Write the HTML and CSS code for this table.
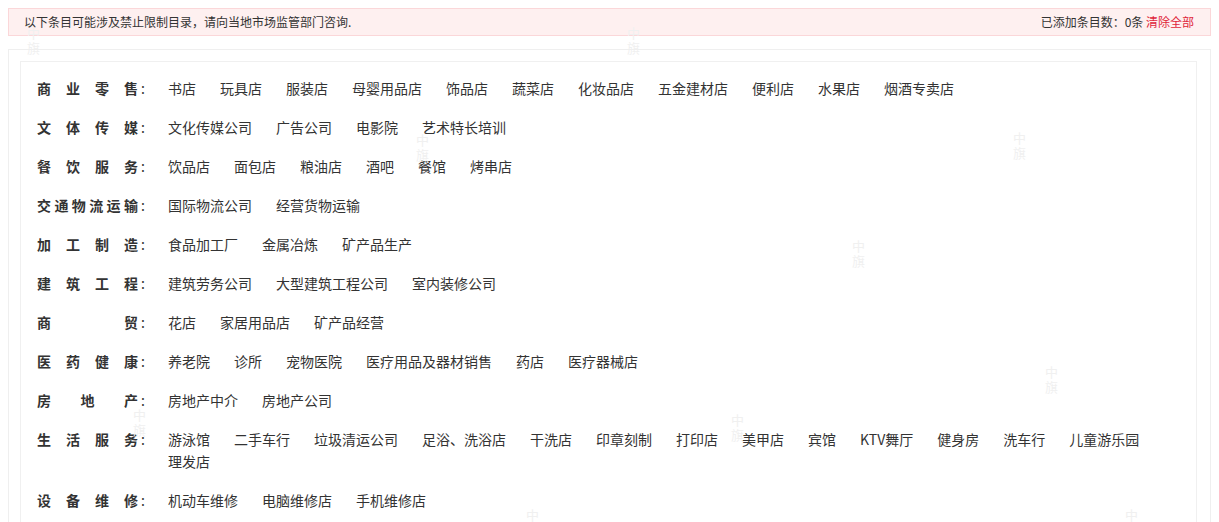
FILE: index.html
```html
<!DOCTYPE html>
<html lang="zh-CN">
<head>
<meta charset="utf-8">
<title>禁止限制目录</title>
<link rel="stylesheet" href="styles.css">
</head>
<body>
<div class="alert">
  <span class="alert-msg">以下条目可能涉及禁止限制目录，请向当地市场监管部门咨询.</span>
  <span class="alert-count">已添加条目数：0条 <a class="clear" href="#">清除全部</a></span>
</div>

<div class="outer">
  <div class="inner">
    <div class="row"><div class="label"><span class="lbl">商业零售</span><span class="colon">:</span></div>
      <div class="items"><a>书店</a><a>玩具店</a><a>服装店</a><a>母婴用品店</a><a>饰品店</a><a>蔬菜店</a><a>化妆品店</a><a>五金建材店</a><a>便利店</a><a>水果店</a><a>烟酒专卖店</a></div></div>
    <div class="row"><div class="label"><span class="lbl">文体传媒</span><span class="colon">:</span></div>
      <div class="items"><a>文化传媒公司</a><a>广告公司</a><a>电影院</a><a>艺术特长培训</a></div></div>
    <div class="row"><div class="label"><span class="lbl">餐饮服务</span><span class="colon">:</span></div>
      <div class="items"><a>饮品店</a><a>面包店</a><a>粮油店</a><a>酒吧</a><a>餐馆</a><a>烤串店</a></div></div>
    <div class="row"><div class="label"><span class="lbl">交通物流运输</span><span class="colon">:</span></div>
      <div class="items"><a>国际物流公司</a><a>经营货物运输</a></div></div>
    <div class="row"><div class="label"><span class="lbl">加工制造</span><span class="colon">:</span></div>
      <div class="items"><a>食品加工厂</a><a>金属冶炼</a><a>矿产品生产</a></div></div>
    <div class="row"><div class="label"><span class="lbl">建筑工程</span><span class="colon">:</span></div>
      <div class="items"><a>建筑劳务公司</a><a>大型建筑工程公司</a><a>室内装修公司</a></div></div>
    <div class="row"><div class="label"><span class="lbl">商贸</span><span class="colon">:</span></div>
      <div class="items"><a>花店</a><a>家居用品店</a><a>矿产品经营</a></div></div>
    <div class="row"><div class="label"><span class="lbl">医药健康</span><span class="colon">:</span></div>
      <div class="items"><a>养老院</a><a>诊所</a><a>宠物医院</a><a>医疗用品及器材销售</a><a>药店</a><a>医疗器械店</a></div></div>
    <div class="row"><div class="label"><span class="lbl">房地产</span><span class="colon">:</span></div>
      <div class="items"><a>房地产中介</a><a>房地产公司</a></div></div>
    <div class="row"><div class="label"><span class="lbl">生活服务</span><span class="colon">:</span></div>
      <div class="items"><a>游泳馆</a><a>二手车行</a><a>垃圾清运公司</a><a>足浴、洗浴店</a><a>干洗店</a><a>印章刻制</a><a>打印店</a><a>美甲店</a><a>宾馆</a><a>KTV舞厅</a><a>健身房</a><a>洗车行</a><a>儿童游乐园</a><a>理发店</a></div></div>
    <div class="row"><div class="label"><span class="lbl">设备维修</span><span class="colon">:</span></div>
      <div class="items"><a>机动车维修</a><a>电脑维修店</a><a>手机维修店</a></div></div>
  </div>
</div>

<div class="wm" style="left:27px;top:25px">中<br>旗</div>
<div class="wm" style="left:627px;top:25px">中<br>旗</div>
<div class="wm" style="left:416px;top:132px">中<br>旗</div>
<div class="wm" style="left:1013px;top:130px">中<br>旗</div>
<div class="wm" style="left:852px;top:238px">中<br>旗</div>
<div class="wm" style="left:1045px;top:364px">中<br>旗</div>
<div class="wm" style="left:133px;top:407px">中<br>旗</div>
<div class="wm" style="left:731px;top:412px">中<br>旗</div>
<div class="wm" style="left:526px;top:507px">中<br>旗</div>
<div class="wm" style="left:1125px;top:507px">中<br>旗</div>
</body>
</html>
```

FILE: styles.css
```css
html {
  overflow: hidden;
}
body {
  margin: 8px;
  font-family: "Noto Sans CJK SC", "Noto Sans", sans-serif;
  color: #333;
  background: #fff;
  position: relative;
}
.alert {
  display: flex;
  justify-content: space-between;
  align-items: center;
  height: 28px;
  box-sizing: border-box;
  padding: 0 16px 0 15px;
  background: #fef0f0;
  border: 1px solid #fbd7d9;
  font-size: 12px;
  line-height: 16px;
}
.clear {
  color: #e0263a;
  text-decoration: none;
}
.outer {
  margin-top: 13px;
  border: 1px solid #efefef;
  border-bottom: none;
  padding: 11px 13px 0 11px;
}
.inner {
  border: 1px solid #f0f0f0;
  border-bottom: none;
  padding: 15px 16px 20px 16px;
  display: flex;
  flex-direction: column;
  gap: 17px;
}
.row {
  display: flex;
  align-items: flex-start;
  font-size: 14px;
  line-height: 22px;
}
.label {
  flex: 0 0 131px;
  display: flex;
  font-weight: bold;
  color: #333;
}
.lbl {
  width: 101px;
  text-align: justify;
  text-align-last: justify;
  text-justify: inter-character;
  white-space: nowrap;
}
.colon {
  font-weight: normal;
  margin-left: 3px;
}
.items {
  flex: 1;
  display: flex;
  flex-wrap: wrap;
  column-gap: 24px;
}
.items a {
  color: #333;
  white-space: nowrap;
  cursor: pointer;
}
.wm {
  position: absolute;
  margin: -8px 0 0 -8px;
  font-size: 13px;
  line-height: 15px;
  color: #f0f0f0;
  font-family: "Noto Sans CJK SC", serif;
  pointer-events: none;
}
```
